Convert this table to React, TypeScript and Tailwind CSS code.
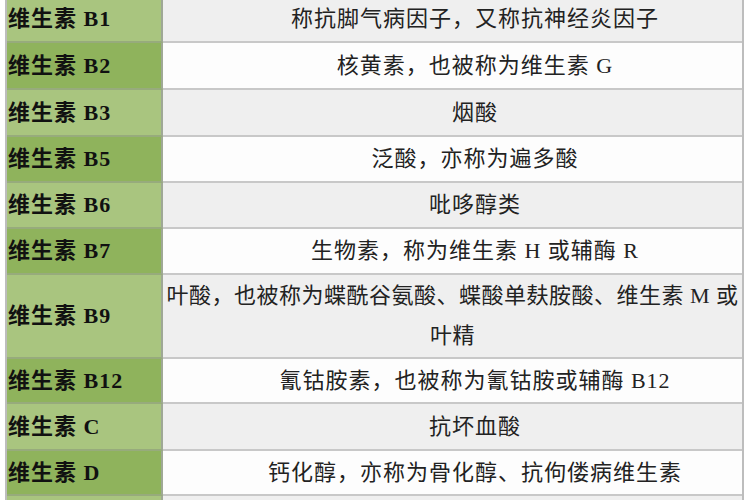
const rows = [
  { name: "维生素 B1", desc: ["称抗脚气病因子，又称抗神经炎因子"], h: "h-[47px]", wide: false },
  { name: "维生素 B2", desc: ["核黄素，也被称为维生素 G"], h: "h-[47px]", wide: false },
  { name: "维生素 B3", desc: ["烟酸"], h: "h-[47px]", wide: false },
  { name: "维生素 B5", desc: ["泛酸，亦称为遍多酸"], h: "h-[46px]", wide: false },
  { name: "维生素 B6", desc: ["吡哆醇类"], h: "h-[46px]", wide: false },
  { name: "维生素 B7", desc: ["生物素，称为维生素 H 或辅酶 R"], h: "h-[46px]", wide: false },
  {
    name: "维生素 B9",
    desc: ["叶酸，也被称为蝶酰谷氨酸、蝶酸单麸胺酸、维生素 M 或", "叶精"],
    h: "h-[84px]",
    wide: true,
  },
  { name: "维生素 B12", desc: ["氰钴胺素，也被称为氰钴胺或辅酶 B12"], h: "h-[45px]", wide: false },
  { name: "维生素 C", desc: ["抗坏血酸"], h: "h-[47px]", wide: false },
  { name: "维生素 D", desc: ["钙化醇，亦称为骨化醇、抗佝偻病维生素"], h: "h-[45px]", wide: false },
  { name: "", desc: [], h: "h-[46px]", wide: false },
];

export default function App() {
  return (
    <div className="h-[500px] w-[750px] overflow-hidden bg-white">
      <div className="-mt-[4px] pl-[5px] pr-[6px]">
        <div
          className="flex flex-col border-x-2 border-[#bdbdbd] text-[22px] leading-[30px] tracking-[1px]"
          style={{ fontFamily: '"Liberation Serif", "Noto Sans CJK SC", serif' }}
        >
          {rows.map((r, i) => (
            <div key={i} className={`flex ${r.h}`}>
              <div
                className={`flex w-[156px] shrink-0 items-center border-r-2 border-b-2 border-r-[#9fa896] border-b-[#97ab7c] pl-[1px] font-bold text-[#111] ${
                  i % 2 === 0 ? "bg-[#a9c57f]" : "bg-[#8fb35c]"
                }`}
              >
                {r.name}
              </div>
              <div
                className={`flex flex-1 flex-col items-center justify-center border-b-2 border-[#c8c8c8] text-center text-[#222] ${
                  r.wide ? "leading-[40px] tracking-[0.5px]" : "pl-[45px]"
                } ${i % 2 === 0 ? "bg-[#efefef]" : "bg-[#fdfdfd]"}`}
              >
                {r.desc.map((line) => (
                  <span key={line} className="whitespace-nowrap">
                    {line}
                  </span>
                ))}
              </div>
            </div>
          ))}
        </div>
      </div>
    </div>
  );
}
